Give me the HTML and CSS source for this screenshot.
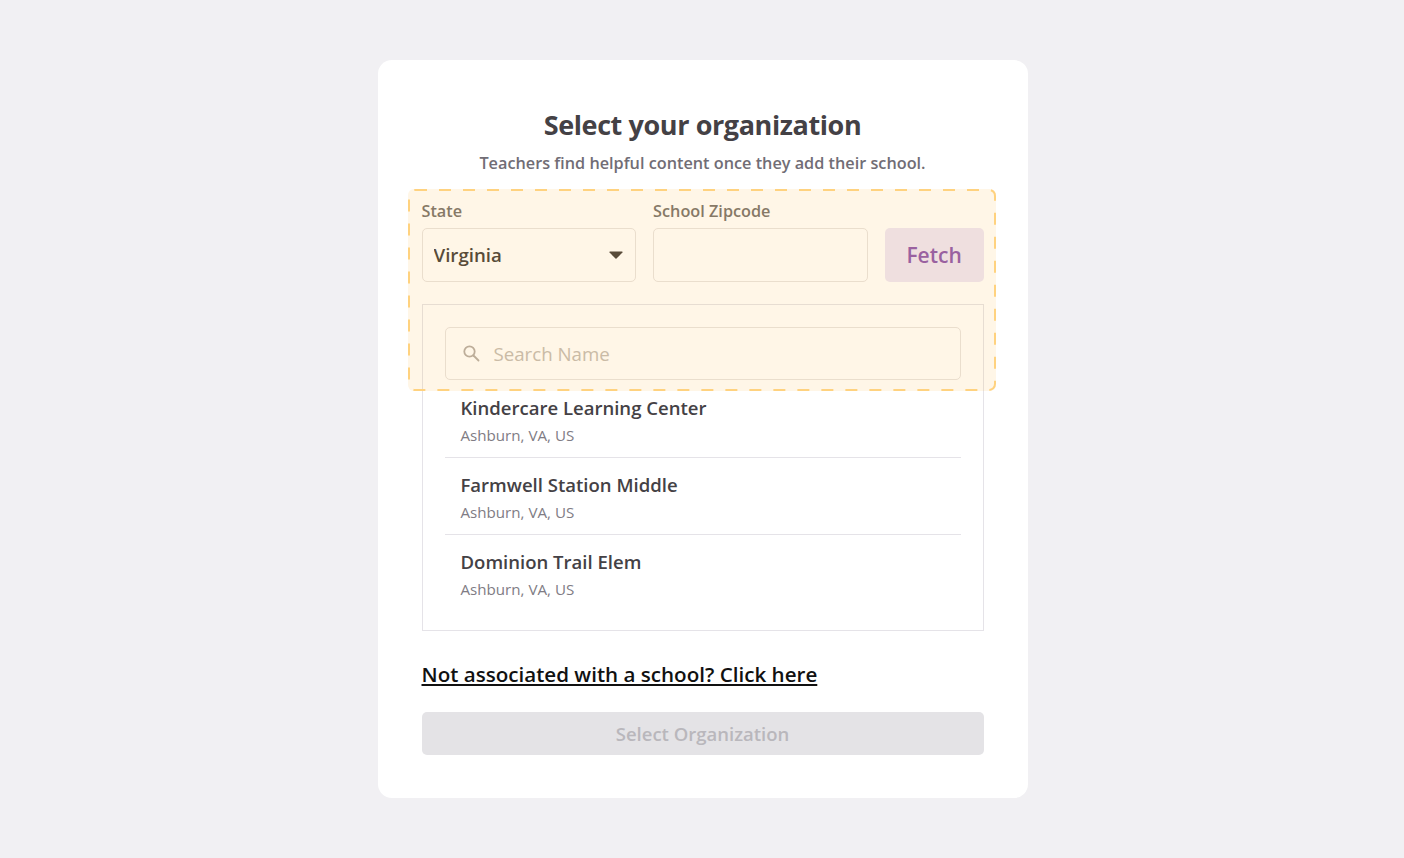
FILE: index.html
```html
<!DOCTYPE html>
<html lang="en">

<head>
    <meta charset="UTF-8">
    <meta name="viewport" content="width=device-width, initial-scale=1.0">
    <title>Select your organization</title>

    <link rel="stylesheet" href="styles.css">
</head>

<body>
    <div class="card">
        <h1>Select your organization</h1>
        <p class="subtitle">Teachers find helpful content once they add their school.</p>

        <form class="lookup">
            <div class="field">
                <label for="state">State</label>
                <div class="select-wrap">
                    <select id="state">
                        <option>Virginia</option>
                    </select>
                    <svg class="caret" width="14" height="8" viewBox="0 0 14 8">
                        <path d="M1 0.5h12c.6 0 .9.7.5 1.1L7.5 7.4c-.3.3-.7.3-1 0L.5 1.6C.1 1.2.4.5 1 .5z" />
                    </svg>
                </div>
            </div>
            <div class="field">
                <label for="zipcode">School Zipcode</label>
                <input type="text" id="zipcode">
            </div>
            <button type="button" class="fetch-btn">Fetch</button>
        </form>

        <div class="results">
            <div class="search">
                <svg class="search-icon" width="18" height="18" viewBox="0 0 18 18">
                    <circle cx="7.5" cy="7.5" r="5.2" />
                    <path d="M11.5 11.5l5 5" />
                </svg>
                <input type="text" placeholder="Search Name">
            </div>
            <ul class="school-list">
                <li class="school">
                    <div class="school-name">Kindercare Learning Center</div>
                    <div class="school-place">Ashburn, VA, US</div>
                </li>
                <li class="school">
                    <div class="school-name">Farmwell Station Middle</div>
                    <div class="school-place">Ashburn, VA, US</div>
                </li>
                <li class="school">
                    <div class="school-name">Dominion Trail Elem</div>
                    <div class="school-place">Ashburn, VA, US</div>
                </li>
            </ul>
        </div>

        <a class="no-school" href="#">Not associated with a school? Click here</a>
        <button type="button" class="submit-btn" disabled>Select Organization</button>

        <!-- highlight sits over the top part of the form -->
        <div class="highlight">
            <svg width="588" height="202" viewBox="0 0 588 202">
                <rect x="1" y="1" width="586" height="200" rx="6" />
            </svg>
        </div>
    </div>
</body>

</html>
```

FILE: styles.css
```css
* {
    box-sizing: border-box;
}

body {
    font-family: "Open Sans", sans-serif;
    background-color: #f1f0f3;
    margin: 0;
    padding: 60px 0 60px 1px;
    height: 858px;
    overflow: hidden;
}

.card {
    position: relative;
    width: 650px;
    height: 738px;
    margin: 0 auto;
    padding: 47px 44px 0;
    background-color: #fff;
    border-radius: 14px;
}

h1 {
    margin: 0;
    font-size: 27px;
    line-height: 36px;
    font-weight: 700;
    letter-spacing: -0.4px;
    text-align: center;
    color: #444145;
}

.subtitle {
    margin: 9px 0 0;
    font-size: 16.25px;
    line-height: 22px;
    font-weight: 600;
    text-align: center;
    color: #716d75;
}

.lookup {
    display: flex;
    align-items: flex-end;
    gap: 17px;
    margin-top: 26px;
}

.field {
    width: 215px;
}

.field label {
    display: block;
    margin-bottom: 6px;
    font-size: 16.25px;
    line-height: 22px;
    font-weight: 600;
    color: #78736f;
}

.select-wrap {
    position: relative;
}

select,
.field input {
    display: block;
    width: 100%;
    height: 54px;
    background-color: #fff;
    border: 1px solid #e8e4e2;
    border-radius: 5px;
    font-family: "Open Sans", sans-serif;
}

select {
    appearance: none;
    padding: 0 11px 2px;
    font-size: 18.7px;
    font-weight: 600;
    color: #453f3c;
}

.caret {
    position: absolute;
    right: 13px;
    top: 23px;
    fill: #453f3c;
}

.fetch-btn {
    width: 99px;
    height: 54px;
    padding: 0;
    background-color: #ede6f7;
    border: none;
    border-radius: 5px;
    font-family: "Open Sans", sans-serif;
    font-size: 21px;
    font-weight: 600;
    color: #8e58b0;
}

.results {
    height: 327px;
    margin-top: 22px;
    padding: 22px 22px 0;
    border: 1px solid #e5e3e8;
}

.search {
    position: relative;
}

.search input {
    display: block;
    width: 100%;
    height: 53px;
    padding: 0 16px 0 48px;
    background-color: #fff;
    border: 1px solid #e8e4e2;
    border-radius: 5px;
    font-family: "Open Sans", sans-serif;
    font-size: 18.7px;
}

.search input::placeholder {
    color: #c4bdb6;
    opacity: 1;
}

.search-icon {
    position: absolute;
    left: 17px;
    top: 17px;
    fill: none;
    stroke: #b5aea8;
    stroke-width: 1.8;
    stroke-linecap: round;
}

.school-list {
    margin: 1px 0 0;
    padding: 0;
    list-style: none;
}

.school {
    height: 77px;
    padding: 14px 16px 0;
    border-bottom: 1px solid #e5e3e8;
}

.school:last-child {
    border-bottom: none;
}

.school-name {
    font-size: 18.55px;
    line-height: 26px;
    font-weight: 600;
    color: #444145;
}

.school-place {
    margin-top: 4px;
    font-size: 15.15px;
    line-height: 20px;
    color: #807c84;
}

.no-school {
    display: block;
    width: fit-content;
    margin-top: 29px;
    font-size: 20.6px;
    line-height: 28px;
    font-weight: 600;
    color: #111;
    text-decoration: underline;
}

.submit-btn {
    display: block;
    width: 100%;
    height: 43px;
    margin-top: 24px;
    padding: 0;
    background-color: #e4e3e6;
    border: none;
    border-radius: 5px;
    font-family: "Open Sans", sans-serif;
    font-size: 18.5px;
    font-weight: 600;
    color: #b9b7bc;
}

.highlight {
    position: absolute;
    left: 30px;
    top: 129px;
    width: 588px;
    height: 202px;
    background-color: rgba(255, 170, 40, 0.11);
    border-radius: 6px;
}

.highlight svg {
    display: block;
    fill: none;
    stroke: #ffd27f;
    stroke-width: 2;
    stroke-dasharray: 12 12;
}
```
